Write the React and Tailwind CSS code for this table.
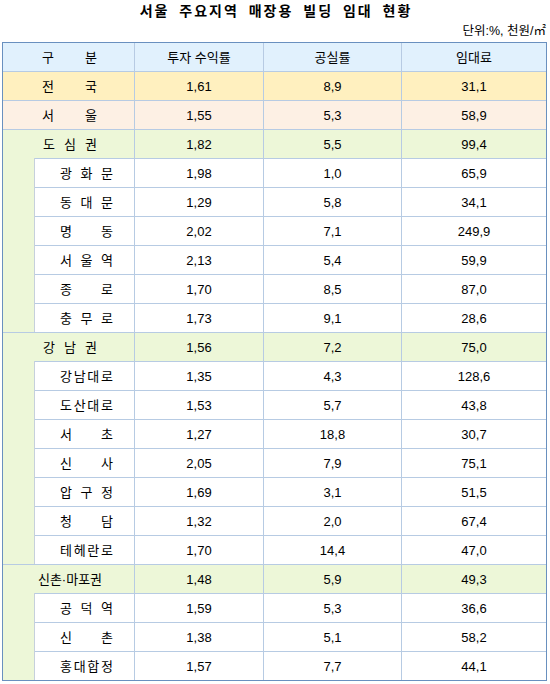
import React from 'react';

const font = { fontFamily: '"Liberation Sans", "Noto Sans CJK KR", sans-serif' };

// 도심권 / 강남권 / 신촌·마포권 groups with their sub areas
const groups = [
  {
    name: '도심권',
    spread: true,
    vals: ['1,82', '5,5', '99,4'],
    items: [
      ['광화문', '1,98', '1,0', '65,9'],
      ['동대문', '1,29', '5,8', '34,1'],
      ['명동', '2,02', '7,1', '249,9'],
      ['서울역', '2,13', '5,4', '59,9'],
      ['종로', '1,70', '8,5', '87,0'],
      ['충무로', '1,73', '9,1', '28,6'],
    ],
  },
  {
    name: '강남권',
    spread: true,
    vals: ['1,56', '7,2', '75,0'],
    items: [
      ['강남대로', '1,35', '4,3', '128,6'],
      ['도산대로', '1,53', '5,7', '43,8'],
      ['서초', '1,27', '18,8', '30,7'],
      ['신사', '2,05', '7,9', '75,1'],
      ['압구정', '1,69', '3,1', '51,5'],
      ['청담', '1,32', '2,0', '67,4'],
      ['테헤란로', '1,70', '14,4', '47,0'],
    ],
  },
  {
    name: '신촌·마포권',
    spread: false,
    vals: ['1,48', '5,9', '49,3'],
    items: [
      ['공덕역', '1,59', '5,3', '36,6'],
      ['신촌', '1,38', '5,1', '58,2'],
      ['홍대합정', '1,57', '7,7', '44,1'],
    ],
  },
];

const Spread = ({ text, width }) => (
  <div className={`flex justify-between ${width}`}>
    {text.split('').map((c, i) => (
      <span key={i}>{c}</span>
    ))}
  </div>
);

const Values = ({ vals }) => (
  <>
    <div className="w-[129px] h-full flex items-center justify-center border-r border-[#b7cbe3]">{vals[0]}</div>
    <div className="w-[138px] h-full flex items-center justify-center border-r border-[#b7cbe3]">{vals[1]}</div>
    <div className="flex-1 h-full flex items-center justify-center">{vals[2]}</div>
  </>
);

const TopRow = ({ label, vals, bg }) => (
  <div className={`flex h-[29px] border-b border-[#b7cbe3] ${bg}`}>
    <div className="w-[132px] h-full flex items-center justify-center border-r border-[#b7cbe3] pl-[2px]">
      <Spread text={label} width="w-[55px]" />
    </div>
    <Values vals={vals} />
  </div>
);

const Group = ({ g, last }) => (
  <div className={`bg-[#edf7d8] ${last ? '' : 'border-b border-[#b7cbe3]'}`}>
    <div className="flex h-[28px]">
      <div className="w-[132px] h-full flex items-center justify-center border-r border-[#b7cbe3] pl-[3px]">
        {g.spread ? <Spread text={g.name} width="w-[54px]" /> : <span>{g.name}</span>}
      </div>
      <Values vals={g.vals} />
    </div>
    <div className="flex">
      <div className="w-[31px] shrink-0" />
      <div className="flex-1 bg-white border-l border-[#c6d0dc]">
        {g.items.map((it) => (
          <div key={it[0]} className="flex h-[29px] border-t border-[#b7cbe3]">
            <div className="w-[100px] h-full flex items-center justify-center border-r border-[#b7cbe3] pl-[4px]">
              <Spread text={it[0]} width="w-[53px]" />
            </div>
            <Values vals={it.slice(1)} />
          </div>
        ))}
      </div>
    </div>
  </div>
);

export default function App() {
  return (
    <div className="w-[550px] h-[684px] bg-white text-black text-[13px] overflow-hidden" style={font}>
      <div className="h-[23px] flex items-center justify-center">
        <span className="text-[14px] font-bold tracking-[2px] [word-spacing:4px] pl-[2px]">
          서울 주요지역 매장용 빌딩 임대 현황
        </span>
      </div>
      <div className="h-[19px] flex items-start justify-end pr-[4px] pt-[2px] text-[12.5px] leading-none">
        단위:%, 천원/㎡
      </div>
      <div className="ml-[2px] w-[545px] border border-[#6990bf] leading-none">
        <TopRow label="구분" vals={['투자 수익률', '공실률', '임대료']} bg="bg-[#e1f1fd]" />
        <TopRow label="전국" vals={['1,61', '8,9', '31,1']} bg="bg-[#fff0bf]" />
        <TopRow label="서울" vals={['1,55', '5,3', '58,9']} bg="bg-[#fdf0e4]" />
        {groups.map((g, i) => (
          <Group key={g.name} g={g} last={i === groups.length - 1} />
        ))}
      </div>
    </div>
  );
}
